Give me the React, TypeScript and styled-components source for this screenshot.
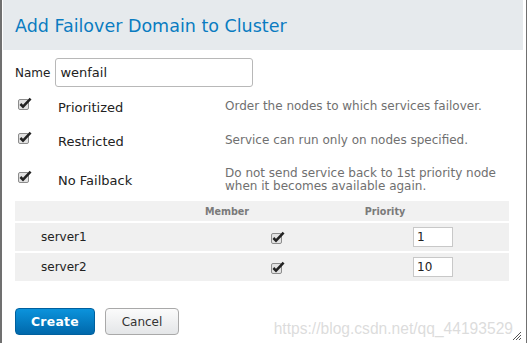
import React from 'react';
import styled, { createGlobalStyle } from 'styled-components';

const GlobalStyle = createGlobalStyle`
    html, body {
        margin: 0;
        padding: 0;
        background: #ffffff;
    }
    body {
        font-family: 'DejaVu Sans', sans-serif;
        color: #222;
    }
`;

const Dialog = styled.div`
    position: relative;
    box-sizing: border-box;
    width: 527px;
    height: 343px;
    border-left: 2px solid #707070;
    border-right: 1px solid #707070;
    background: #fff;
    overflow: hidden;
`;

const Header = styled.div`
    display: flex;
    align-items: center;
    height: 50px;
    margin: 0 3px 0 1px;
    padding-left: 12px;
    background: #e6eaed;
`;

const Title = styled.h3`
    margin: 0;
    padding-top: 1px;
    font-size: 17.5px;
    font-weight: normal;
    color: #0a7cc1;
`;

const Body = styled.div`
    padding: 0 17px 0 13px;
`;

const NameRow = styled.div`
    display: flex;
    align-items: center;
    gap: 5px;
    padding-top: 8px;
    height: 29px;
    font-size: 12px;
`;

const TextInput = styled.input`
    box-sizing: border-box;
    width: 198px;
    height: 29px;
    padding: 0 4px;
    border: 1px solid #b8b8b8;
    border-radius: 3px;
    font-family: 'DejaVu Sans', sans-serif;
    font-size: 13px;
    color: #222;
    outline: none;
`;

const Options = styled.div`
    display: grid;
    grid-template-columns: 43px 167px 1fr;
    grid-template-rows: 34px 34px 44px;
    margin-top: 3px;
`;

const OptionCell = styled.div`
    display: flex;
    align-items: center;
`;

const CheckCell = styled(OptionCell)`
    padding-left: 3px;
    margin-top: -7px;
`;

const Label = styled(OptionCell)`
    font-size: 13px;
    color: #222;
`;

const Hint = styled(OptionCell)`
    font-size: 12px;
    line-height: 12.5px;
    color: #707070;
    margin-top: -1px;
`;

const Table = styled.div`
    display: grid;
    grid-template-columns: 150px 124px 192px 1fr;
    row-gap: 2px;
    margin-top: -1px;
`;

const HeadCell = styled.div`
    display: flex;
    align-items: center;
    justify-content: center;
    height: 20px;
    background: #f1f1f1;
    font-size: 9.6px;
    font-weight: bold;
    color: #7a7a7a;
`;

const Cell = styled.div<{ $pad?: number; $end?: boolean }>`
    display: flex;
    align-items: center;
    justify-content: ${(p) => (p.$end ? 'flex-end' : 'flex-start')};
    height: 28px;
    padding-left: ${(p) => p.$pad ?? 0}px;
    padding-right: ${(p) => (p.$end ? 3 : 0)}px;
    background: #f0f0f0;
    font-size: 12px;
    color: #222;
`;

const PriorityInput = styled.input`
    box-sizing: border-box;
    width: 40px;
    height: 20px;
    padding: 0 3px;
    border: 1px solid #c8c8c8;
    font-family: 'DejaVu Sans', sans-serif;
    font-size: 12px;
    color: #222;
    background: #fff;
    outline: none;
`;

const Actions = styled.div`
    display: flex;
    gap: 10px;
    margin-top: 27px;
`;

const Button = styled.button<{ $primary?: boolean }>`
    box-sizing: border-box;
    height: 27px;
    padding: 0;
    border-radius: 4px;
    font-family: 'DejaVu Sans', sans-serif;
    font-size: 12px;
    cursor: pointer;
    ${(p) =>
        p.$primary
            ? `
        width: 80px;
        border: 1px solid #00609e;
        background: linear-gradient(#0b93dc, #0068ab);
        color: #fff;
        font-weight: bold;
        font-size: 12.4px;
        letter-spacing: 0.3px;
    `
            : `
        width: 74px;
        border: 1px solid #a9a9a9;
        background: linear-gradient(#fbfbfb, #e4e6e8);
        color: #333;
    `}
`;

const Watermark = styled.span`
    position: absolute;
    right: 13px;
    bottom: 5px;
    font-family: 'Liberation Sans', Arial, sans-serif;
    font-size: 15.6px;
    color: rgba(205, 205, 205, 0.7);
    pointer-events: none;
`;

const Grip = styled.svg`
    position: absolute;
    right: 4px;
    bottom: 2px;
`;

const Check = () => (
    <svg width="15" height="13" viewBox="0 0 15 13">
        <rect x="0.5" y="2.5" width="10" height="10" rx="1.5" fill="#e2e2e2" stroke="#8c8c8c" />
        <path d="M2.4 7 L5 9.6 L12.6 1.6" fill="none" stroke="#222" strokeWidth="2.5" />
    </svg>
);

const options = [
    { label: 'Prioritized', hint: ['Order the nodes to which services failover.'] },
    { label: 'Restricted', hint: ['Service can run only on nodes specified.'] },
    {
        label: 'No Failback',
        hint: ['Do not send service back to 1st priority node', 'when it becomes available again.'],
    },
];

const servers = [
    { name: 'server1', priority: '1' },
    { name: 'server2', priority: '10' },
];

export default function App() {
    return (
        <>
            <GlobalStyle />
            <Dialog>
                <Header>
                    <Title>Add Failover Domain to Cluster</Title>
                </Header>
                <Body>
                    <NameRow>
                        Name
                        <TextInput defaultValue="wenfail" />
                    </NameRow>
                    <Options>
                        {options.map((o) => (
                            <React.Fragment key={o.label}>
                                <CheckCell>
                                    <Check />
                                </CheckCell>
                                <Label>{o.label}</Label>
                                <Hint>
                                    <div>
                                        {o.hint.map((h) => (
                                            <div key={h}>{h}</div>
                                        ))}
                                    </div>
                                </Hint>
                            </React.Fragment>
                        ))}
                    </Options>
                    <Table>
                        <HeadCell />
                        <HeadCell>Member</HeadCell>
                        <HeadCell>Priority</HeadCell>
                        <HeadCell />
                        {servers.map((s) => (
                            <React.Fragment key={s.name}>
                                <Cell $pad={26}>{s.name}</Cell>
                                <Cell $end>
                                    <Check />
                                </Cell>
                                <Cell $pad={124}>
                                    <PriorityInput defaultValue={s.priority} />
                                </Cell>
                                <Cell />
                            </React.Fragment>
                        ))}
                    </Table>
                    <Actions>
                        <Button $primary>Create</Button>
                        <Button>Cancel</Button>
                    </Actions>
                </Body>
                <Watermark>https://blog.csdn.net/qq_44193529</Watermark>
                <Grip width="12" height="12" viewBox="0 0 12 12">
                    <path d="M11 3 L3 11 M11 6 L6 11 M11 9 L9 11" stroke="#555" strokeWidth="1" />
                </Grip>
            </Dialog>
        </>
    );
}
